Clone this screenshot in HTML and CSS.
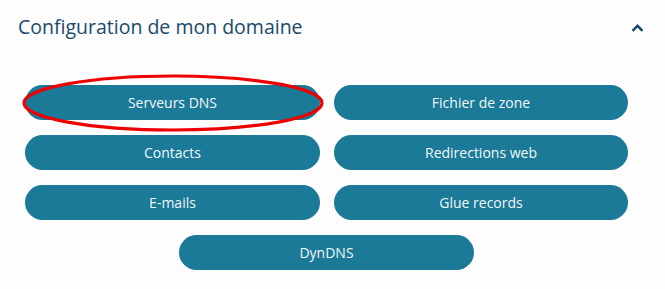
FILE: index.html
```html
<!DOCTYPE html>
<html lang="fr">
<head>
<meta charset="utf-8">
<link rel="stylesheet" href="styles.css">
</head>
<body>
<section class="panel">
  <header class="panel-head">
    <h2 class="panel-title">Configuration de mon domaine</h2>
    <svg class="chevron" width="13" height="8" viewBox="0 0 13 8"><path d="M1.5 6.8 L6.5 1.8 L11.5 6.8" fill="none" stroke="#1a4a6b" stroke-width="2.4"/></svg>
  </header>
  <div class="grid">
    <a class="btn btn-marked">Serveurs DNS
      <svg class="mark" width="304" height="60" viewBox="0 0 304 60"><ellipse cx="152" cy="30" rx="149" ry="27" fill="none" stroke="#ee0000" stroke-width="3.2"/></svg>
    </a>
    <a class="btn">Fichier de zone</a>
    <a class="btn">Contacts</a>
    <a class="btn">Redirections web</a>
    <a class="btn">E-mails</a>
    <a class="btn">Glue records</a>
    <a class="btn btn-center">DynDNS</a>
  </div>
</section>
</body>
</html>
```
FILE: styles.css
```css
html, body {
  margin: 0;
  padding: 0;
  background: #fdfdfd;
}
body {
  font-family: "Open Sans", "Noto Sans", sans-serif;
  width: 665px;
  height: 289px;
  overflow: hidden;
}
.panel {
  padding: 12px 0 0 0;
}
.panel-head {
  display: flex;
  align-items: center;
  justify-content: space-between;
  padding: 0 21px 0 18px;
  height: 28px;
}
.panel-title {
  margin: 0;
  font-size: 19.5px;
  font-weight: 400;
  color: #1a4a6b;
}
.chevron {
  display: block;
  margin-top: 4px;
}
.grid {
  display: grid;
  grid-template-columns: 295px 294px;
  column-gap: 14px;
  row-gap: 15px;
  margin: 45px 0 0 25px;
  width: 603px;
}
.btn {
  position: relative;
  display: flex;
  align-items: center;
  justify-content: center;
  height: 35px;
  border-radius: 18px;
  background: #1a7a97;
  color: #f2f7f9;
  font-size: 14px;
  text-decoration: none;
}
.btn-center {
  grid-column: 1 / span 2;
  justify-self: center;
  width: 295px;
}
.mark {
  position: absolute;
  left: -4px;
  top: -12px;
  pointer-events: none;
}
```
